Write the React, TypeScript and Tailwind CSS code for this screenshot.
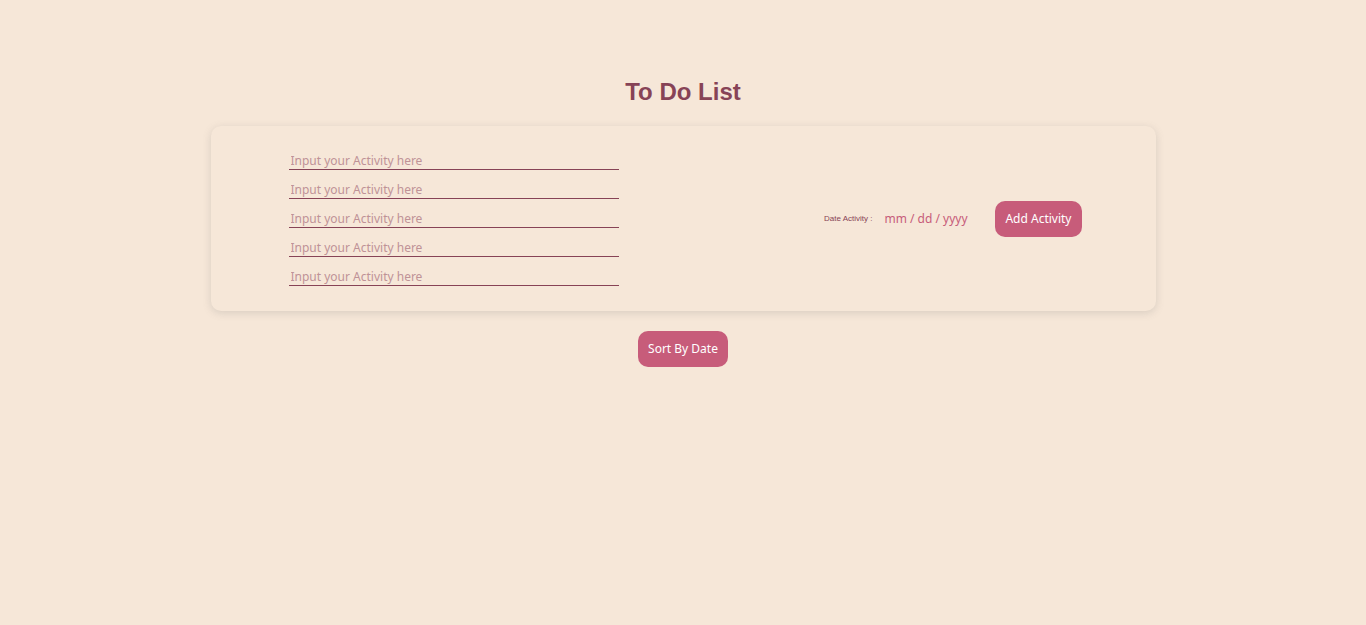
const activityFields = [1, 2, 3, 4, 5];

const buttonClass =
  "h-9 shrink-0 cursor-pointer rounded-[10px] bg-[#c75c7a] px-[10px] font-['Noto_Sans',sans-serif] text-[12px] text-white";

export default function App() {
  return (
    <main className="flex min-h-screen flex-col items-center bg-[#f6e7d8] px-4 pt-[74px] font-['Liberation_Sans',sans-serif]">
      <h1 className="text-[24px] leading-9 font-bold text-[#874356]">To Do List</h1>

      <form
        className="mt-4 flex w-full max-w-[945px] items-center justify-between rounded-[10px] py-6 pr-[74px] pl-[78px] shadow-[0_2px_8px_rgba(99,99,99,0.2)]"
        onSubmit={(event) => event.preventDefault()}
      >
        <div className="flex w-[330px] flex-col gap-[9px] pb-px">
          {activityFields.map((n) => (
            <input
              key={n}
              type="text"
              aria-label={`Activity ${n}`}
              placeholder="Input your Activity here"
              className="h-5 w-full border-b border-[#874356] bg-transparent px-[2px] pt-px font-['Noto_Sans',sans-serif] text-[12px] text-[#874356] outline-none placeholder:text-[#bf9297]"
            />
          ))}
        </div>

        <div className="flex items-center">
          <label htmlFor="date" className="mr-3 text-[8px] text-[#874356]">
            Date Activity :
          </label>
          <input
            id="date"
            type="text"
            placeholder="mm / dd / yyyy"
            className="mr-6 w-[87px] bg-transparent font-['Noto_Sans',sans-serif] text-[12px] text-[#c75c7a] outline-none placeholder:text-[#c75c7a]"
          />
          <button type="submit" className={buttonClass}>
            Add Activity
          </button>
        </div>
      </form>

      <button type="button" className={`mt-5 ${buttonClass}`}>
        Sort By Date
      </button>
    </main>
  );
}
